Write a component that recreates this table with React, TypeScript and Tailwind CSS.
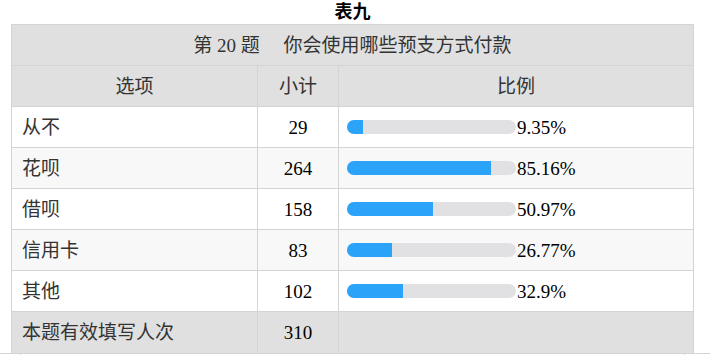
import React from 'react';

const rows = [
  { name: '从不', count: 29, pct: 9.35 },
  { name: '花呗', count: 264, pct: 85.16 },
  { name: '借呗', count: 158, pct: 50.97 },
  { name: '信用卡', count: 83, pct: 26.77 },
  { name: '其他', count: 102, pct: 32.9 },
];

const font = { fontFamily: '"Liberation Serif", "Noto Sans CJK SC", serif' };

const App: React.FC = () => {
  return (
    <div className="w-[710px] h-[355px] bg-white overflow-hidden text-[#222]" style={font}>
      <div className="w-[683px] ml-[11px] h-[24px] flex items-center justify-center text-[18px] font-bold text-black leading-none">
        表九
      </div>
      <table className="ml-[11px] w-[683px] table-fixed border-collapse text-[19px] leading-none">
        <colgroup>
          <col className="w-[246px]" />
          <col className="w-[81px]" />
          <col />
        </colgroup>
        <tbody>
          <tr className="h-[41px] bg-[#e0e0e0] text-[#333]">
            <td colSpan={3} className="border border-[#d4d4d4] text-center">
              第 20 题&nbsp;&nbsp;&nbsp;&nbsp;&nbsp;你会使用哪些预支方式付款
            </td>
          </tr>
          <tr className="h-[41px] bg-[#e0e0e0] text-[#333]">
            <td className="border border-[#d4d4d4] text-center">选项</td>
            <td className="border border-[#d4d4d4] text-center">小计</td>
            <td className="border border-[#d4d4d4] text-center">比例</td>
          </tr>
          {rows.map((r, i) => (
            <tr key={r.name} className={`h-[41px] ${i % 2 === 1 ? 'bg-[#f8f8f8]' : 'bg-white'}`}>
              <td className="border border-[#d4d4d4] pl-[10px] text-[#333]">{r.name}</td>
              <td className="border border-[#d4d4d4] text-center text-black">{r.count}</td>
              <td className="border border-[#d4d4d4] pl-[8px]">
                <div className="flex items-center text-black">
                  <div className="w-[169px] h-[14px] rounded-full bg-[#e1e1e3] overflow-hidden">
                    <div className="h-full bg-[#2ba3f8]" style={{ width: `${r.pct}%` }} />
                  </div>
                  <span className="ml-[1px]">{r.pct}%</span>
                </div>
              </td>
            </tr>
          ))}
          <tr className="h-[41px] bg-[#e0e0e0]">
            <td className="border border-[#d4d4d4] border-b-0 pl-[10px] text-[#333]">本题有效填写人次</td>
            <td className="border border-[#d4d4d4] border-b-0 text-center text-black">310</td>
            <td className="border border-[#d4d4d4] border-b-0"></td>
          </tr>
        </tbody>
      </table>
      <div className="w-[710px] h-[4px] border-t border-[#d4d4d4] flex justify-between pl-[20px] pr-[25px]">
        <div className="w-px h-full bg-[#d4d4d4]" />
        <div className="w-px h-full bg-[#d4d4d4]" />
      </div>
    </div>
  );
};

export default App;
